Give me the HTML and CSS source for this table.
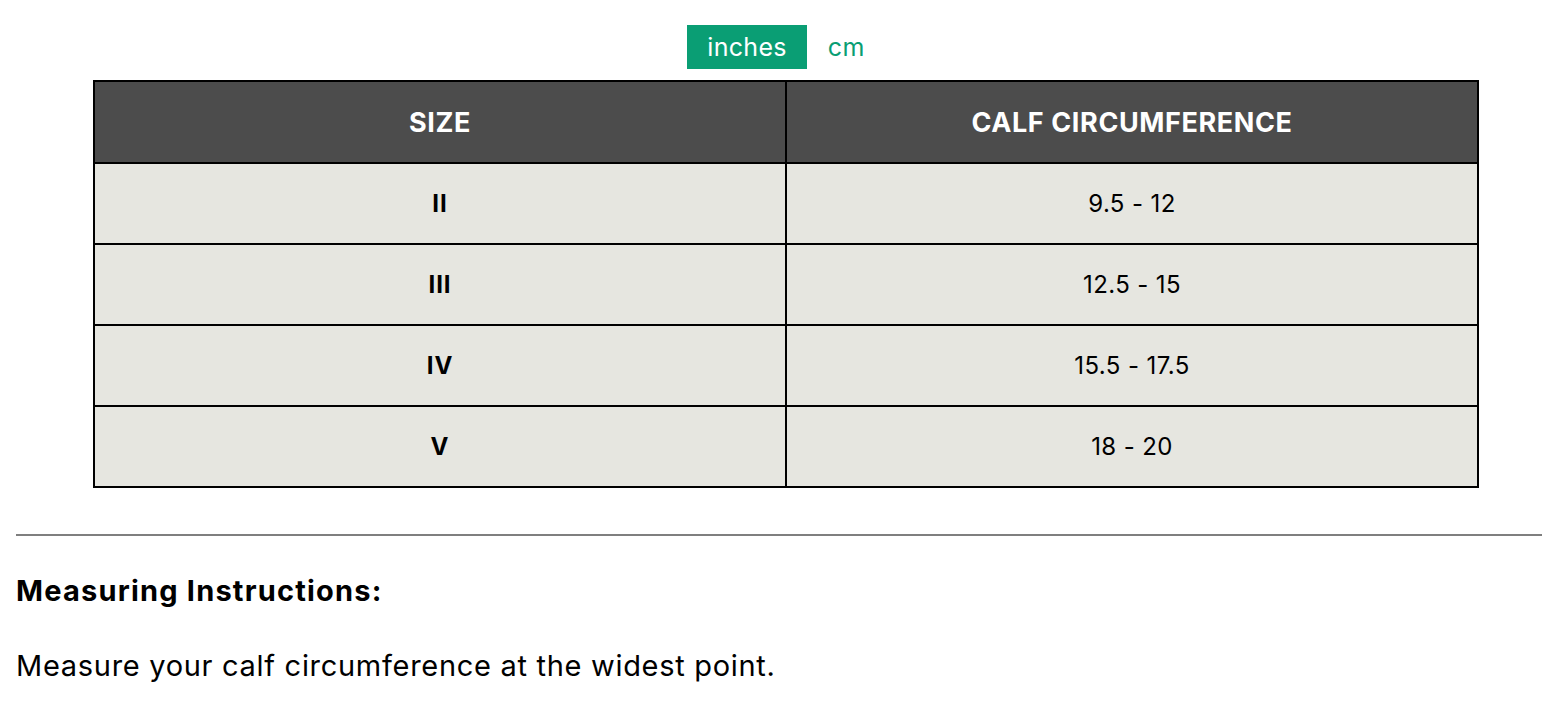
FILE: index.html
```html
<!DOCTYPE html>
<html lang="en">
<head>
<meta charset="utf-8">
<title>Size chart</title>
<link rel="stylesheet" href="styles.css">
</head>
<body>
<div class="page">
  <div class="units">
    <button class="unit active">inches</button>
    <button class="unit">cm</button>
  </div>
  <table class="chart">
    <thead>
      <tr><th>SIZE</th><th>CALF CIRCUMFERENCE</th></tr>
    </thead>
    <tbody>
      <tr><td class="size">II</td><td>9.5 - 12</td></tr>
      <tr><td class="size">III</td><td>12.5 - 15</td></tr>
      <tr><td class="size">IV</td><td>15.5 - 17.5</td></tr>
      <tr><td class="size">V</td><td>18 - 20</td></tr>
    </tbody>
  </table>
  <hr class="rule">
  <h3 class="heading">Measuring Instructions:</h3>
  <p class="text">Measure your calf circumference at the widest point.</p>
</div>
</body>
</html>
```

FILE: styles.css
```css
html { overflow: hidden; }
body {
  margin: 0;
  background: #fff;
  font-family: Inter, "Noto Sans", sans-serif;
  color: #000;
}
.page {
  width: 1540px;
  padding: 25px 0 0 16px;
}
.units {
  display: flex;
  justify-content: center;
  gap: 1px;
}
.unit {
  font-family: inherit;
  font-size: 25px;
  letter-spacing: 0.3px;
  line-height: 44px;
  height: 44px;
  padding: 0 20px;
  border: 0;
  background: transparent;
  color: #0a9e74;
  cursor: pointer;
}
.unit.active {
  background: #0a9e74;
  color: #fff;
}
.chart {
  width: 90%;
  margin: 11px auto 0;
  border-collapse: collapse;
  border: 2px solid #000;
}
.chart th, .chart td {
  border: 2px solid #000;
  text-align: center;
  padding: 0;
}
.chart th {
  background: #4c4c4c;
  color: #fff;
  font-size: 27px;
  letter-spacing: 0.6px;
  font-weight: 700;
  height: 80px;
}
.chart td {
  background: #e6e6e0;
  font-size: 24px;
  letter-spacing: 0.4px;
  height: 79px;
  width: 50%;
}
.chart td.size { font-weight: 700; letter-spacing: 1px; }
.rule {
  margin: 46px 0 0;
  border: 0;
  height: 2px;
  background: #7f7f7f;
}
.heading {
  margin: 37px 0 0;
  font-size: 29px;
  letter-spacing: 1.2px;
  font-weight: 700;
}
.text {
  margin: 40px 0 0;
  font-size: 29px;
  letter-spacing: 0.7px;
}
```
